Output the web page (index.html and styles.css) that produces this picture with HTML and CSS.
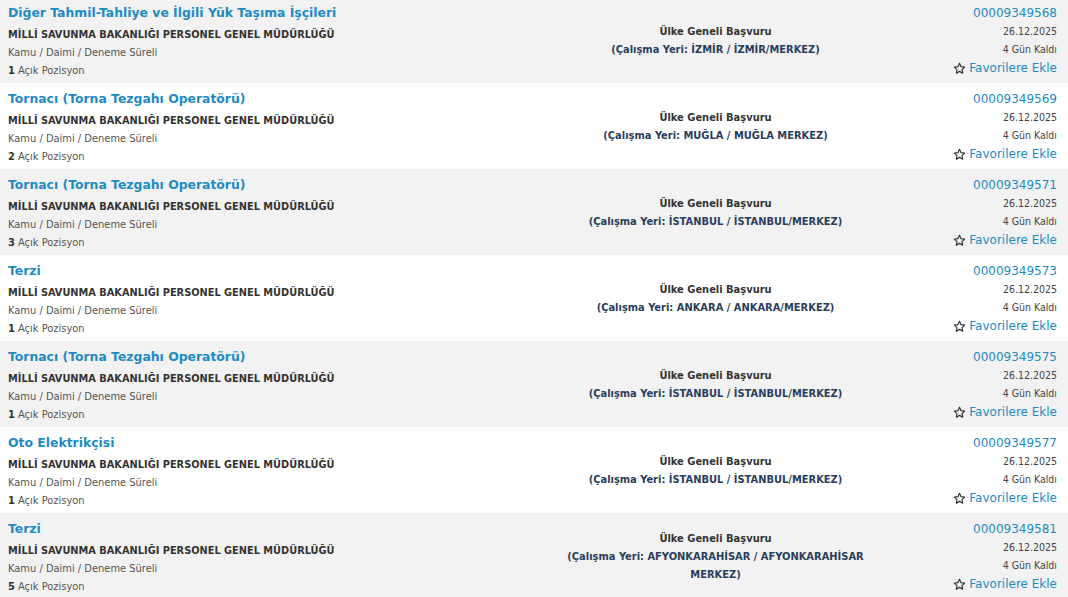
FILE: index.html
```html
<!DOCTYPE html>
<html lang="tr">
<head>
<meta charset="utf-8">
<title>İlanlar</title>
<link rel="stylesheet" href="styles.css">
</head>
<body>
<div class="list">
  <div class="row alt">
    <div class="info">
      <a class="title">Diğer Tahmil-Tahliye ve İlgili Yük Taşıma İşçileri</a>
      <div class="org">MİLLİ SAVUNMA BAKANLIĞI PERSONEL GENEL MÜDÜRLÜĞÜ</div>
      <div class="meta">Kamu / Daimi / Deneme Süreli</div>
      <div class="meta"><b>1</b> Açık Pozisyon</div>
    </div>
    <div class="place">
      <div class="p1">Ülke Geneli Başvuru</div>
      <div class="p2">(Çalışma Yeri: İZMİR / İZMİR/MERKEZ)</div>
    </div>
    <div class="side">
      <a class="no">00009349568</a>
      <div class="small">26.12.2025</div>
      <div class="small">4 Gün Kaldı</div>
      <a class="fav"><svg viewBox="0 0 24 24" width="13" height="13"><path d="M12 2.5l2.9 6.1 6.6.8-4.9 4.6 1.3 6.6L12 17.3l-5.9 3.3 1.3-6.6-4.9-4.6 6.6-.8z" fill="none" stroke="#333" stroke-width="2.2" stroke-linejoin="round"/></svg>Favorilere Ekle</a>
    </div>
  </div>

  <div class="row">
    <div class="info">
      <a class="title">Tornacı (Torna Tezgahı Operatörü)</a>
      <div class="org">MİLLİ SAVUNMA BAKANLIĞI PERSONEL GENEL MÜDÜRLÜĞÜ</div>
      <div class="meta">Kamu / Daimi / Deneme Süreli</div>
      <div class="meta"><b>2</b> Açık Pozisyon</div>
    </div>
    <div class="place">
      <div class="p1">Ülke Geneli Başvuru</div>
      <div class="p2">(Çalışma Yeri: MUĞLA / MUĞLA MERKEZ)</div>
    </div>
    <div class="side">
      <a class="no">00009349569</a>
      <div class="small">26.12.2025</div>
      <div class="small">4 Gün Kaldı</div>
      <a class="fav"><svg viewBox="0 0 24 24" width="13" height="13"><path d="M12 2.5l2.9 6.1 6.6.8-4.9 4.6 1.3 6.6L12 17.3l-5.9 3.3 1.3-6.6-4.9-4.6 6.6-.8z" fill="none" stroke="#333" stroke-width="2.2" stroke-linejoin="round"/></svg>Favorilere Ekle</a>
    </div>
  </div>

  <div class="row alt">
    <div class="info">
      <a class="title">Tornacı (Torna Tezgahı Operatörü)</a>
      <div class="org">MİLLİ SAVUNMA BAKANLIĞI PERSONEL GENEL MÜDÜRLÜĞÜ</div>
      <div class="meta">Kamu / Daimi / Deneme Süreli</div>
      <div class="meta"><b>3</b> Açık Pozisyon</div>
    </div>
    <div class="place">
      <div class="p1">Ülke Geneli Başvuru</div>
      <div class="p2">(Çalışma Yeri: İSTANBUL / İSTANBUL/MERKEZ)</div>
    </div>
    <div class="side">
      <a class="no">00009349571</a>
      <div class="small">26.12.2025</div>
      <div class="small">4 Gün Kaldı</div>
      <a class="fav"><svg viewBox="0 0 24 24" width="13" height="13"><path d="M12 2.5l2.9 6.1 6.6.8-4.9 4.6 1.3 6.6L12 17.3l-5.9 3.3 1.3-6.6-4.9-4.6 6.6-.8z" fill="none" stroke="#333" stroke-width="2.2" stroke-linejoin="round"/></svg>Favorilere Ekle</a>
    </div>
  </div>

  <div class="row">
    <div class="info">
      <a class="title">Terzi</a>
      <div class="org">MİLLİ SAVUNMA BAKANLIĞI PERSONEL GENEL MÜDÜRLÜĞÜ</div>
      <div class="meta">Kamu / Daimi / Deneme Süreli</div>
      <div class="meta"><b>1</b> Açık Pozisyon</div>
    </div>
    <div class="place">
      <div class="p1">Ülke Geneli Başvuru</div>
      <div class="p2">(Çalışma Yeri: ANKARA / ANKARA/MERKEZ)</div>
    </div>
    <div class="side">
      <a class="no">00009349573</a>
      <div class="small">26.12.2025</div>
      <div class="small">4 Gün Kaldı</div>
      <a class="fav"><svg viewBox="0 0 24 24" width="13" height="13"><path d="M12 2.5l2.9 6.1 6.6.8-4.9 4.6 1.3 6.6L12 17.3l-5.9 3.3 1.3-6.6-4.9-4.6 6.6-.8z" fill="none" stroke="#333" stroke-width="2.2" stroke-linejoin="round"/></svg>Favorilere Ekle</a>
    </div>
  </div>

  <div class="row alt">
    <div class="info">
      <a class="title">Tornacı (Torna Tezgahı Operatörü)</a>
      <div class="org">MİLLİ SAVUNMA BAKANLIĞI PERSONEL GENEL MÜDÜRLÜĞÜ</div>
      <div class="meta">Kamu / Daimi / Deneme Süreli</div>
      <div class="meta"><b>1</b> Açık Pozisyon</div>
    </div>
    <div class="place">
      <div class="p1">Ülke Geneli Başvuru</div>
      <div class="p2">(Çalışma Yeri: İSTANBUL / İSTANBUL/MERKEZ)</div>
    </div>
    <div class="side">
      <a class="no">00009349575</a>
      <div class="small">26.12.2025</div>
      <div class="small">4 Gün Kaldı</div>
      <a class="fav"><svg viewBox="0 0 24 24" width="13" height="13"><path d="M12 2.5l2.9 6.1 6.6.8-4.9 4.6 1.3 6.6L12 17.3l-5.9 3.3 1.3-6.6-4.9-4.6 6.6-.8z" fill="none" stroke="#333" stroke-width="2.2" stroke-linejoin="round"/></svg>Favorilere Ekle</a>
    </div>
  </div>

  <div class="row">
    <div class="info">
      <a class="title">Oto Elektrikçisi</a>
      <div class="org">MİLLİ SAVUNMA BAKANLIĞI PERSONEL GENEL MÜDÜRLÜĞÜ</div>
      <div class="meta">Kamu / Daimi / Deneme Süreli</div>
      <div class="meta"><b>1</b> Açık Pozisyon</div>
    </div>
    <div class="place">
      <div class="p1">Ülke Geneli Başvuru</div>
      <div class="p2">(Çalışma Yeri: İSTANBUL / İSTANBUL/MERKEZ)</div>
    </div>
    <div class="side">
      <a class="no">00009349577</a>
      <div class="small">26.12.2025</div>
      <div class="small">4 Gün Kaldı</div>
      <a class="fav"><svg viewBox="0 0 24 24" width="13" height="13"><path d="M12 2.5l2.9 6.1 6.6.8-4.9 4.6 1.3 6.6L12 17.3l-5.9 3.3 1.3-6.6-4.9-4.6 6.6-.8z" fill="none" stroke="#333" stroke-width="2.2" stroke-linejoin="round"/></svg>Favorilere Ekle</a>
    </div>
  </div>

  <div class="row alt">
    <div class="info">
      <a class="title">Terzi</a>
      <div class="org">MİLLİ SAVUNMA BAKANLIĞI PERSONEL GENEL MÜDÜRLÜĞÜ</div>
      <div class="meta">Kamu / Daimi / Deneme Süreli</div>
      <div class="meta"><b>5</b> Açık Pozisyon</div>
    </div>
    <div class="place">
      <div class="p1">Ülke Geneli Başvuru</div>
      <div class="p2">(Çalışma Yeri: AFYONKARAHİSAR / AFYONKARAHİSAR MERKEZ)</div>
    </div>
    <div class="side">
      <a class="no">00009349581</a>
      <div class="small">26.12.2025</div>
      <div class="small">4 Gün Kaldı</div>
      <a class="fav"><svg viewBox="0 0 24 24" width="13" height="13"><path d="M12 2.5l2.9 6.1 6.6.8-4.9 4.6 1.3 6.6L12 17.3l-5.9 3.3 1.3-6.6-4.9-4.6 6.6-.8z" fill="none" stroke="#333" stroke-width="2.2" stroke-linejoin="round"/></svg>Favorilere Ekle</a>
    </div>
  </div>
</div>
</body>
</html>
```

FILE: styles.css
```css
html, body {
  margin: 0;
  padding: 0;
  background: #ffffff;
  overflow: hidden;
}
body {
  font-family: "DejaVu Sans", Verdana, sans-serif;
  color: #333;
}
.list {
  margin-top: -3px;
}
.row {
  display: grid;
  grid-template-columns: 555px 305px 1fr;
  height: 86px;
  box-sizing: border-box;
  padding: 7px 11px 3px 8px;
  background: #ffffff;
}
.row.alt {
  background: #f2f2f2;
}
.info {
  display: flex;
  flex-direction: column;
}
.title {
  font-size: 12.4px;
  font-weight: bold;
  line-height: 18px;
  color: #1e8bc3;
  white-space: nowrap;
}
.org {
  margin-top: 4px;
  font-family: "DejaVu Sans Condensed", "DejaVu Sans", sans-serif;
  font-size: 10.9px;
  font-weight: bold;
  line-height: 18px;
  color: #333;
  white-space: nowrap;
}
.meta {
  font-family: "DejaVu Sans Condensed", "DejaVu Sans", sans-serif;
  font-size: 11px;
  line-height: 18px;
  color: #555;
  white-space: nowrap;
}
.meta b {
  color: #333;
}
.place {
  display: flex;
  flex-direction: column;
  justify-content: center;
  text-align: center;
  font-family: "DejaVu Sans Condensed", "DejaVu Sans", sans-serif;
  font-size: 11px;
  font-weight: bold;
  line-height: 18px;
  margin-top: -2px;
}
.p1 {
  color: #333;
}
.p2 {
  color: #2a3e5c;
}
.side {
  display: flex;
  flex-direction: column;
  align-items: flex-end;
  text-align: right;
}
.no {
  font-size: 12px;
  line-height: 18px;
  color: #1e8bc3;
}
.small {
  font-family: "DejaVu Sans Condensed", "DejaVu Sans", sans-serif;
  font-size: 10.5px;
  line-height: 18px;
  color: #444;
}
.fav {
  display: flex;
  align-items: center;
  gap: 3px;
  margin-top: 1px;
  font-size: 12px;
  line-height: 18px;
  color: #1e8bc3;
  white-space: nowrap;
}
.fav svg {
  display: block;
}
```
